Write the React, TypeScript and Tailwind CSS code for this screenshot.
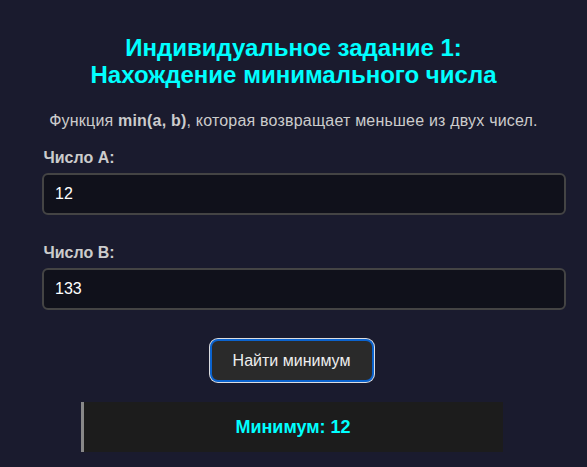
import React from "react";

export default function App() {
  return (
    <div className="min-h-screen bg-[#1a1b2e] font-['Liberation_Sans',Arial,sans-serif]">
      <div className="w-[500px] mx-auto pt-[34px] pb-[20px]">
        <h1 className="text-center text-[24px] leading-[27px] font-bold text-[#00ffff]">
          Индивидуальное задание 1:
          <br />
          Нахождение минимального числа
        </h1>
        <p className="mt-[24px] text-center text-[16px] leading-[18px] tracking-[0.2px] text-[#cccccc]">
          Функция <b>min(a, b)</b>, которая возвращает меньшее из двух чисел.
        </p>
        <label className="block mt-[20px] text-[16px] leading-[16px] font-bold text-[#cccccc]">
          Число A:
        </label>
        <input
          readOnly
          value="12"
          className="block mt-[7px] w-[524px] -ml-[1.5px] h-[42px] box-border border-2 border-[#444444] rounded-[6px] bg-[#10111b] px-[11px] text-[16px] text-white outline-none"
        />
        <label className="block mt-[30px] text-[16px] leading-[16px] font-bold text-[#cccccc]">
          Число B:
        </label>
        <input
          readOnly
          value="133"
          className="block mt-[7px] w-[524px] -ml-[1.5px] h-[42px] box-border border-2 border-[#444444] rounded-[6px] bg-[#10111b] px-[11px] text-[16px] text-white outline-none"
        />
        <div className="mt-[29px] flex">
          <button className="ml-[166px] w-[164px] h-[43px] rounded-[8px] bg-[#2a2a2a] border-2 border-[#0b63ce] shadow-[0_0_0_1px_rgba(255,255,255,0.85)] text-[16px] text-[#eeeeee]">
            Найти минимум
          </button>
        </div>
        <div className="mt-[20px] ml-[37px] w-[422px] h-[50px] bg-[#1c1c1c] border-l-[3px] border-[#888888] flex items-center justify-center">
          <span className="text-[18px] font-bold text-[#00ffff]">Минимум: 12</span>
        </div>
      </div>
    </div>
  );
}
